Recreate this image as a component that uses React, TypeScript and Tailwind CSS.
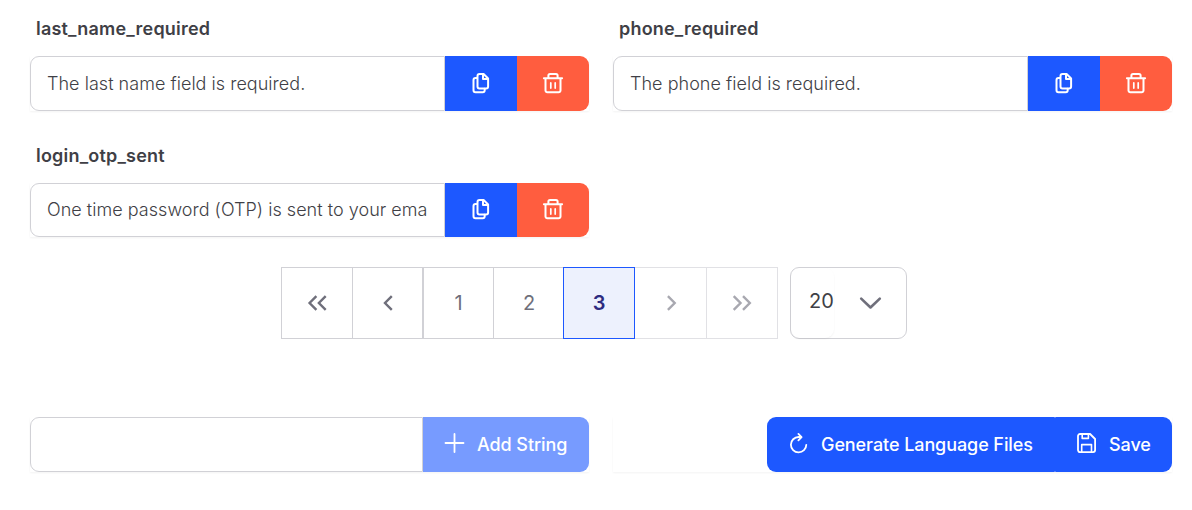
import type { ReactNode } from 'react';

function Icon({ children }: { children: ReactNode }) {
  return (
    <svg
      viewBox="0 0 20 20"
      className="size-5 overflow-visible"
      fill="none"
      stroke="currentColor"
      strokeWidth="2"
      strokeLinecap="round"
      strokeLinejoin="round"
      aria-hidden="true"
    >
      {children}
    </svg>
  );
}

const CopyIcon = () => (
  <Icon>
    <path d="M5.8 5H4.5a2 2 0 0 0-2 2v10.2a2 2 0 0 0 2 2h7.2a2 2 0 0 0 2-2v-1.4" />
    <path d="M8.5 1h4.1l4.5 4.5v8a2 2 0 0 1-2 2H8.5a2 2 0 0 1-2-2V3a2 2 0 0 1 2-2Z" />
    <path d="M12 1.3v4.8h4.8" />
  </Icon>
);

const TrashIcon = () => (
  <Icon>
    <path d="M.9 5.2h18.2M5.4 5V2.6A1.6 1.6 0 0 1 7 1h6a1.6 1.6 0 0 1 1.6 1.6V5M2.5 5.2v12.2a1.8 1.8 0 0 0 1.8 1.8h11.4a1.8 1.8 0 0 0 1.8-1.8V5.2" />
    <path d="M7.8 9.9v5.2M12.2 9.9v5.2" strokeWidth="1.7" />
  </Icon>
);

const PlusIcon = () => (
  <Icon>
    <path d="M9.5 1v18M.5 10h18" strokeWidth="1.8" />
  </Icon>
);

const RefreshIcon = () => (
  <Icon>
    <path d="M12 4H9.6A7.7 7.7 0 1 0 17.3 11.8" strokeWidth="1.8" />
    <path d="M9.4.9l3.2 3.2-3.2 3.2" strokeWidth="1.8" />
  </Icon>
);

const SaveIcon = () => (
  <Icon>
    <path d="M3 1h10.1l5 5v11.1a2 2 0 0 1-2 2H3a2 2 0 0 1-2-2V3a2 2 0 0 1 2-2Z" strokeWidth="1.8" />
    <path d="M5.2 1v4.4h6.2V1M4.7 19v-7.4h9.8V19" strokeWidth="1.6" />
  </Icon>
);

const chevrons = {
  first: 'M9.4 3.2 2.6 10l6.8 6.8M18.7 3.2 11.9 10l6.8 6.8',
  prev: 'M13.8 3.2 7 10l6.8 6.8',
  next: 'M6.9 3.2 13.7 10l-6.8 6.8',
  last: 'M1.7 3.2 8.5 10l-6.8 6.8M11 3.2l6.8 6.8-6.8 6.8',
};

function Chevron({ kind }: { kind: keyof typeof chevrons }) {
  return (
    <svg viewBox="0 0 20 20" className="size-5" fill="none" stroke="currentColor" strokeWidth="2.4" aria-hidden="true">
      <path d={chevrons[kind]} />
    </svg>
  );
}

function StringField({ name, value, height, inputPadding }: { name: string; value: string; height: string; inputPadding: string }) {
  return (
    <div>
      <label className="block h-[39px] pl-1.5 text-[18px] leading-[24px] font-semibold tracking-[0.2px]">{name}</label>
      <div className={`flex w-[559px] shadow-[0_1px_2px_rgba(18,18,23,0.05)] ${height}`}>
        <input
          readOnly
          value={value}
          aria-label={name}
          className={`w-[415px] rounded-l-[9px] border border-[#d1d1d6] bg-white px-4 text-[18px] font-[350] tracking-[0.03px] outline-none ${inputPadding}`}
        />
        <button aria-label="Copy" className="flex w-[72px] items-center justify-center bg-[#1d58ff] pb-0.5 text-white">
          <CopyIcon />
        </button>
        <button aria-label="Delete" className="flex w-[72px] items-center justify-center rounded-r-[9px] bg-[#ff5d3f] pb-0.5 text-white">
          <TrashIcon />
        </button>
      </div>
    </div>
  );
}

function Pagination() {
  const cell = 'flex h-[72px] items-center justify-center border';
  return (
    <nav className="mt-[30px] ml-[251px] flex h-[72px] text-[20px] font-[370] text-[#6f6f7b]">
      <button aria-label="First page" className={`${cell} w-[72px] border-[#d1d1d6]`}><Chevron kind="first" /></button>
      <button aria-label="Previous page" className={`${cell} -ml-px w-[71px] border-[#d1d1d6]`}><Chevron kind="prev" /></button>
      <button className={`${cell} w-[71px] border-[#d1d1d6]`}>1</button>
      <button className={`${cell} w-[71px] border-l-0 border-[#d1d1d6]`}>2</button>
      <button className={`${cell} z-10 -ml-[2px] w-[72px] border-[#1d58ff] bg-[#edf1fd] font-semibold text-[#2d2b80]`}>3</button>
      <button disabled aria-label="Next page" className={`${cell} w-[72px] border-l-0 border-[#e1e1e5] text-[#a8a8b0]`}><Chevron kind="next" /></button>
      <button disabled aria-label="Last page" className={`${cell} w-[71px] border-l-0 border-[#e1e1e5] text-[#a8a8b0]`}><Chevron kind="last" /></button>
      <button className="ml-3 flex w-[117px] rounded-[9px] border border-[#d1d1d6] text-[#3f3f46]">
        <span className="flex h-[70px] w-[43px] items-center rounded-[9px] pb-1 pl-[18px] shadow-[0_1px_2px_rgba(18,18,23,0.05)]">20</span>
        <svg viewBox="0 0 24 24" className="mt-[23px] ml-[24px] size-6 text-[#6f6f7b]" fill="none" stroke="currentColor" strokeWidth="2.6" strokeLinecap="round" strokeLinejoin="round" aria-hidden="true">
          <path d="M3.2 7.6l9.3 8.9 9.3-8.9" />
        </svg>
      </button>
    </nav>
  );
}

export default function App() {
  return (
    <main className="h-[510px] w-[1192px] overflow-hidden bg-white pt-[17px] pl-[30px] font-['Inter',sans-serif] text-[#3f3f46]">
      <div className="grid grid-cols-[559px_559px] gap-x-6 gap-y-[33px]">
        <StringField name="last_name_required" value="The last name field is required." height="h-[55px]" inputPadding="pb-0" />
        <StringField name="phone_required" value="The phone field is required." height="h-[55px]" inputPadding="pb-0" />
        <StringField name="login_otp_sent" value="One time password (OTP) is sent to your ema" height="h-[54px]" inputPadding="pb-0.5" />
      </div>
      <Pagination />
      <footer className="mt-[78px] grid h-[55px] grid-cols-[559px_559px] gap-x-6 text-[18px] font-medium tracking-[-0.08px] text-white">
        <div className="flex shadow-[0_1px_2px_rgba(18,18,23,0.05)]">
          <input aria-label="New string" className="w-[393px] rounded-l-[9px] border border-[#d1d1d6] bg-white px-4 text-[#3f3f46] outline-none" />
          <button className="flex w-[166px] items-center rounded-r-[9px] bg-[#779bff] pl-[22px]">
            <span className="pb-[3px]"><PlusIcon /></span>
            <span className="ml-3">Add String</span>
          </button>
        </div>
        <div className="flex justify-end shadow-[0_1px_2px_rgba(18,18,23,0.05)]">
          <button className="flex w-[288px] items-center rounded-l-[9px] rounded-r-[1px] bg-[#1d58ff] pl-[22px]">
            <span className="pb-[3px]"><RefreshIcon /></span>
            <span className="ml-3">Generate Language Files</span>
          </button>
          <button className="flex w-[117px] items-center rounded-l-[1px] rounded-r-[9px] bg-[#1d58ff] pl-[22px]">
            <span className="pb-[3px]"><SaveIcon /></span>
            <span className="ml-3">Save</span>
          </button>
        </div>
      </footer>
    </main>
  );
}
